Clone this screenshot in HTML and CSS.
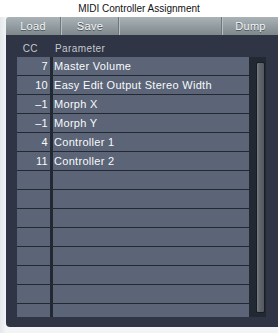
FILE: index.html
```html
<!DOCTYPE html>
<html>
<head>
<meta charset="utf-8">
<link rel="stylesheet" href="styles.css">
</head>
<body>
<div class="title">MIDI Controller Assignment</div>
<div class="window">
  <div class="toolbar">
    <div class="btn btn-load"><span>Load</span></div>
    <div class="btn btn-save"><span>Save</span></div>
    <div class="btn spacer"></div>
    <div class="btn btn-dump"><span>Dump</span></div>
  </div>
  <div class="panel">
    <div class="head">
      <div class="h-cc">CC</div>
      <div class="h-param">Parameter</div>
    </div>
    <div class="table">
      <div class="rows">
        <div class="cc">7</div><div class="param">Master Volume</div>
        <div class="cc">10</div><div class="param">Easy Edit Output Stereo Width</div>
        <div class="cc">–1</div><div class="param">Morph X</div>
        <div class="cc">–1</div><div class="param">Morph Y</div>
        <div class="cc">4</div><div class="param">Controller 1</div>
        <div class="cc">11</div><div class="param">Controller 2</div>
        <div class="cc"></div><div class="param"></div>
        <div class="cc"></div><div class="param"></div>
        <div class="cc"></div><div class="param"></div>
        <div class="cc"></div><div class="param"></div>
        <div class="cc"></div><div class="param"></div>
        <div class="cc"></div><div class="param"></div>
        <div class="cc"></div><div class="param"></div>
        <div class="cc"></div><div class="param"></div>
      </div>
      <div class="scroll"><div class="thumb"></div></div>
    </div>
  </div>
</div>
</body>
</html>
```
FILE: styles.css
```css
html, body {
  margin: 0;
  padding: 0;
}
body {
  width: 278px;
  height: 333px;
  overflow: hidden;
  background: linear-gradient(90deg, #e4e8ec 0px, #f2f4f6 6px);
  font-family: "Liberation Sans", sans-serif;
}
.title {
  height: 17px;
  background: #ffffff;
  color: #111;
  font-family: "Liberation Sans", sans-serif;
  font-size: 10px;
  line-height: 17px;
  text-align: center;
}
.window {
  margin-left: 6px;
  width: 272px;
}
.toolbar {
  height: 18px;
  display: grid;
  grid-template-columns: 55px 58px 1fr 56px;
  background: linear-gradient(180deg, #aab2b6 0%, #949ea2 50%, #7e888c 100%);
  border-top-left-radius: 3px;
}
.btn {
  display: flex;
  justify-content: center;
  align-items: center;
  color: #f4f6f8;
  font-family: "Liberation Sans", sans-serif;
  font-size: 11px;
  letter-spacing: 0.3px;
  text-shadow: 0 1px 0 #4a5256;
  border-left: 1px solid #b8c0c4;
  border-right: 1px solid #6e787c;
  box-sizing: border-box;
}
.btn-load { border-left: none; }
.btn-dump { border-right: none; }
.panel {
  height: 292px;
  background-color: #363c4b;
  background-image: radial-gradient(circle, #2c3240 0.6px, transparent 0.9px);
  background-size: 2px 2px;
  border-bottom-left-radius: 4px;
  padding-left: 11px;
  box-sizing: border-box;
}
.head {
  height: 22px;
  display: flex;
  align-items: center;
  padding-top: 5px;
  box-sizing: border-box;
  color: #c4c9d2;
  font-size: 10px;
  letter-spacing: 0.4px;
}
.h-cc { width: 21px; text-align: right; }
.h-param { margin-left: 17px; }
.table {
  width: 249px;
  height: 260px;
  display: flex;
  background: #232932;
}
.rows {
  width: 232px;
  height: 260px;
  overflow: hidden;
  display: grid;
  grid-template-columns: 33px 196px;
  grid-auto-rows: 18px;
  column-gap: 3px;
  row-gap: 1px;
}
.cc, .param {
  background: #5b6577;
  color: #f8fafc;
  font-size: 11px;
  letter-spacing: 0.3px;
  line-height: 18px;
  white-space: nowrap;
}
.cc { text-align: right; padding-right: 2px; }
.param { padding-left: 1px; }
.scroll {
  flex: 1;
  padding: 5px 1px 4px 7px;
}
.thumb {
  height: 251px;
  background: linear-gradient(90deg, #7a7e86 0px, #62666e 2px, #54585f 100%);
  border: 1px solid #1a1d22;
  border-radius: 2px;
  box-sizing: border-box;
}
```
